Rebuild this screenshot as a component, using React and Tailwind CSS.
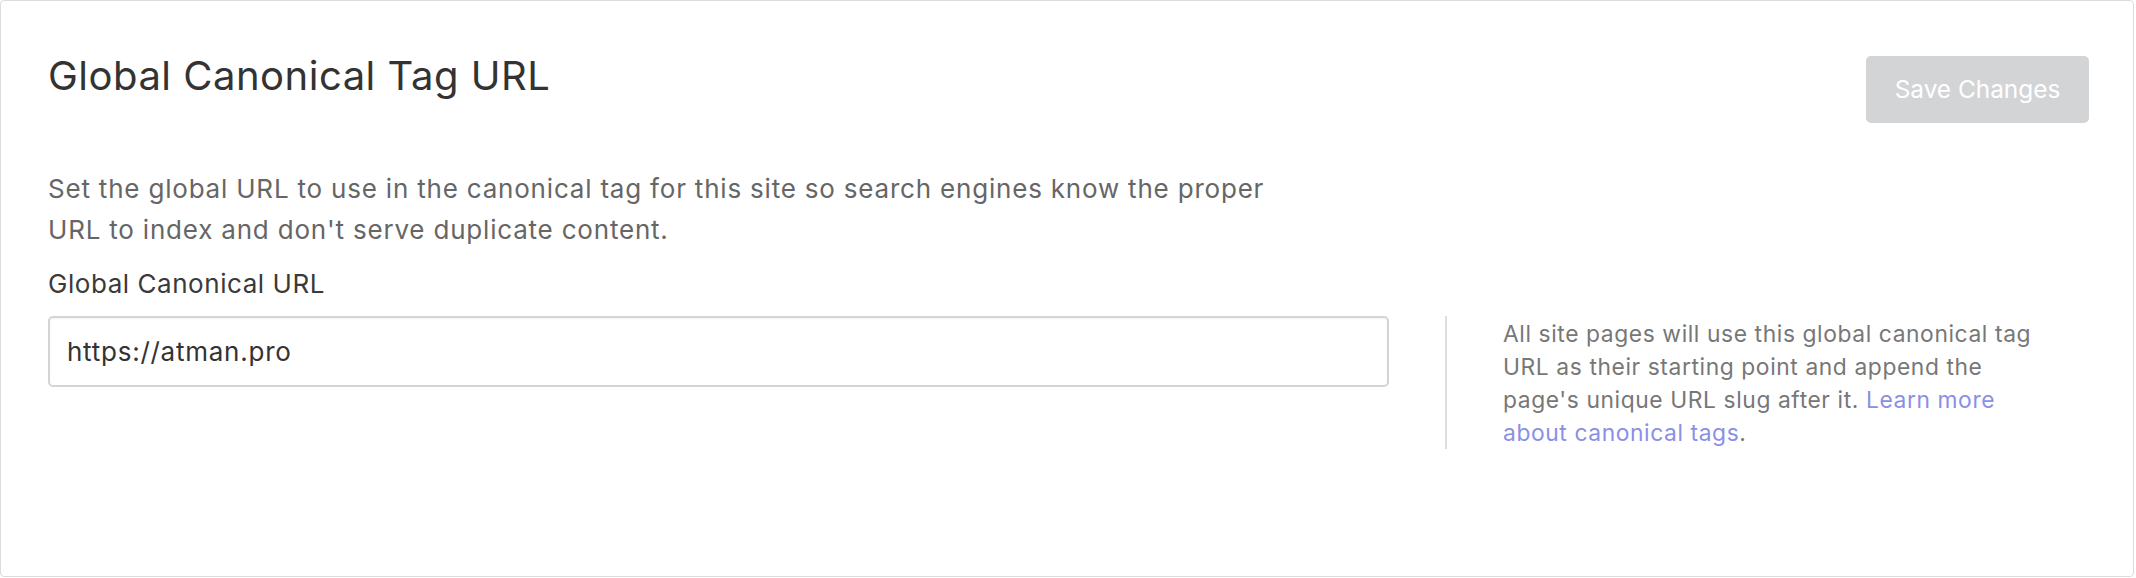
function App() {
  return (
    <div className="bg-white" style={{ fontFamily: "Inter, 'Noto Sans', sans-serif" }}>
      <div className="w-[2134px] h-[577px] border border-[#dcdcdc] rounded-[4px] bg-white pl-[47px] pr-[44px] pt-[48px]">
        <div className="flex justify-between items-start">
          <h1 className="text-[40px] leading-[46px] tracking-[0.5px] font-normal text-[#333333] mt-[4px]">
            Global Canonical Tag URL
          </h1>
          <button className="mt-[7px] w-[223px] h-[67px] rounded-[5px] bg-[#d3d4d6] text-white text-[24.4px]">
            Save Changes
          </button>
        </div>

        <p className="mt-[45px] max-w-[1245px] text-[26px] leading-[41px] tracking-[0.8px] text-[#666666]">
          Set the global URL to use in the canonical tag for this site so search engines know the proper URL to index and don't serve duplicate content.
        </p>

        <label className="block mt-[13px] text-[26px] leading-[41px] tracking-[0.55px] text-[#3a3a3a]">
          Global Canonical URL
        </label>

        <div className="flex mt-[12px]">
          <div className="w-[1341px]">
            <input
              type="text"
              defaultValue="https://atman.pro"
              className="w-full h-[71px] border-2 border-[#d4d4d4] rounded-[5px] px-[17px] text-[26px] tracking-[0.75px] text-[#333333] outline-none shadow-[inset_0_1px_2px_rgba(0,0,0,0.05)]"
            />
          </div>
          <div className="ml-[56px] border-l-2 border-[#dedede] pl-[56px] pt-px">
            <p className="w-[548px] text-[22.8px] leading-[33px] tracking-[0.6px] text-[#777777]">
              All site pages will use this global canonical tag URL as their starting point and append the page's unique URL slug after it.{" "}
              <a href="#" className="text-[#8a8fe6]">Learn more about canonical tags</a>.
            </p>
          </div>
        </div>
      </div>
    </div>
  );
}

export default App;
